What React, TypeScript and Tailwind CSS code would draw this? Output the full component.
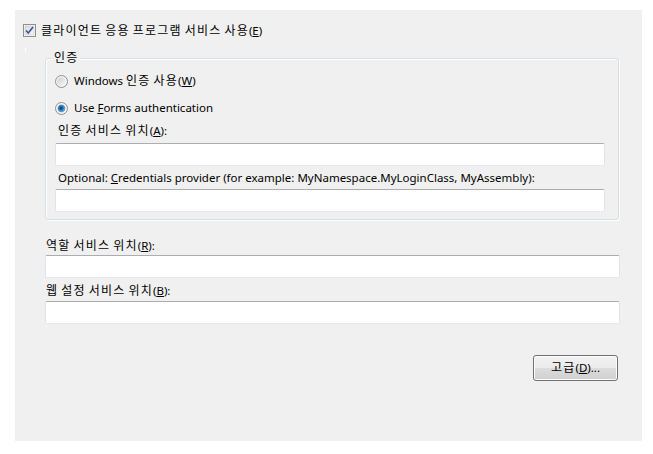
import React from "react"

const font = { fontFamily: '"Noto Sans", "Noto Sans CJK KR", sans-serif' }

// Hangul in the reference runs wider than Noto CJK, so pad those runs
function T({ children }: { children: string }) {
    const parts = children.split(/([\uAC00-\uD7A3]+)/)
    return (
        <>
            {parts.map((p, i) =>
                /[\uAC00-\uD7A3]/.test(p) ? (
                    <span key={i} className="text-[12px] tracking-[1.2px]">
                        {p}
                    </span>
                ) : (
                    p
                )
            )}
        </>
    )
}

function CheckBox() {
    return (
        <svg width="13" height="13" viewBox="0 0 13 13" className="shrink-0">
            <defs>
                <linearGradient id="cbg" x1="0" y1="0" x2="1" y2="1">
                    <stop offset="0" stopColor="#dcdcdc" />
                    <stop offset="1" stopColor="#f6f6f6" />
                </linearGradient>
            </defs>
            <rect x="0.5" y="0.5" width="12" height="12" fill="#fff" stroke="#8e8f8f" />
            <rect x="2" y="2" width="9" height="9" fill="url(#cbg)" stroke="#b8b8b8" strokeWidth="0.5" />
            <path d="M3 6.5 L5.3 9 L10 3" fill="none" stroke="#3a5a96" strokeWidth="1.7" />
        </svg>
    )
}

function Radio({ checked }: { checked?: boolean }) {
    return (
        <svg width="13" height="13" viewBox="0 0 13 13" className="shrink-0">
            <defs>
                <radialGradient id="rOn" cx="0.45" cy="0.45" r="0.6">
                    <stop offset="0" stopColor="#0b3a66" />
                    <stop offset="0.45" stopColor="#1c6fb0" />
                    <stop offset="1" stopColor="#8fd0f5" />
                </radialGradient>
                <linearGradient id="rOff" x1="0" y1="0" x2="1" y2="1">
                    <stop offset="0" stopColor="#cfcfcf" />
                    <stop offset="1" stopColor="#f7f7f7" />
                </linearGradient>
            </defs>
            <circle cx="6.5" cy="6.5" r="6" fill="#f4f4f4" stroke="#8e8f8f" />
            <circle cx="6.5" cy="6.5" r="4.3" fill="url(#rOff)" />
            {checked && <circle cx="6.5" cy="6.5" r="3.4" fill="url(#rOn)" stroke="#1a4e80" strokeWidth="0.4" />}
        </svg>
    )
}

function TextBox({ className }: { className: string }) {
    return (
        <div
            className={
                "h-[23px] rounded-[2px] border border-[#e2e3ea] border-t-[#abadb3] border-b-[#e3e9ef] bg-white " +
                className
            }
        />
    )
}

export default function App() {
    return (
        <div className="h-[454px] w-[653px] bg-white pl-[15px] pt-[10px] text-[11.5px] text-black" style={font}>
            <div className="flex h-[431px] w-[627px] flex-col bg-[#f0f0f0]">
                {/* top checkbox */}
                <div className="ml-[8px] mt-[14px] flex h-[13px] items-center gap-[5px] leading-[16px]">
                    <CheckBox />
                    <span>
                        <T>클라이언트 응용 프로그램 서비스 사용(</T>
                        <u>E</u>)
                    </span>
                </div>
                <div className="ml-[10px] mt-[11px] h-[4px] w-[1px] bg-white" />

                {/* 인증 group */}
                <div className="ml-[30px] mt-[6px] flex w-[574px] flex-col rounded-[3px] border border-[#d5dfe5] pb-[7px] shadow-[inset_1px_1px_0_#fff,1px_1px_0_#fff]">
                    <span className="-mt-[9px] ml-[6px] h-[16px] w-fit bg-[#f0f0f0] px-[2px] leading-[16px]">
                        <T>인증</T>
                    </span>

                    <div className="ml-[9px] mt-[7px] flex h-[16px] items-center gap-[6px] leading-[16px]">
                        <Radio />
                        <span>
                            <T>Windows 인증 사용(</T>
                            <u>W</u>)
                        </span>
                    </div>
                    <div className="ml-[9px] mt-[11px] flex h-[16px] items-center gap-[6px] leading-[16px]">
                        <Radio checked />
                        <span>
                            Use <u>F</u>orms authentication
                        </span>
                    </div>

                    <div className="ml-[12px] mt-[7px] h-[16px] leading-[16px]">
                        <T>인증 서비스 위치(</T>
                        <u>A</u>):
                    </div>
                    <TextBox className="ml-[9px] mt-[4px] w-[550px]" />

                    <div className="ml-[12px] mt-[4px] h-[16px] leading-[16px]">
                        Optional: <u>C</u>redentials provider (for example: MyNamespace.MyLoginClass, MyAssembly):
                    </div>
                    <TextBox className="ml-[9px] mt-[3px] w-[550px]" />
                </div>

                {/* service locations */}
                <div className="ml-[31px] mt-[18px] h-[16px] leading-[16px]">
                    <T>역할 서비스 위치(</T>
                    <u>R</u>):
                </div>
                <TextBox className="ml-[30px] mt-[1px] w-[575px]" />

                <div className="ml-[31px] mt-[5px] h-[16px] leading-[16px]">
                    <T>웹 설정 서비스 위치(</T>
                    <u>B</u>):
                </div>
                <TextBox className="ml-[30px] mt-[2px] w-[575px]" />

                <div className="mr-[24px] mt-[31px] flex justify-end">
                    <button className="h-[26px] w-[85px] rounded-[3px] border border-[#707070] bg-[linear-gradient(#f2f2f2_0%,#ebebeb_50%,#dddddd_50%,#cfcfcf_100%)] text-[11.5px] leading-[16px] shadow-[inset_0_0_0_1px_#fcfcfc]">
                        <T>고급(</T>
                        <u>D</u>)...
                    </button>
                </div>
            </div>
        </div>
    )
}
